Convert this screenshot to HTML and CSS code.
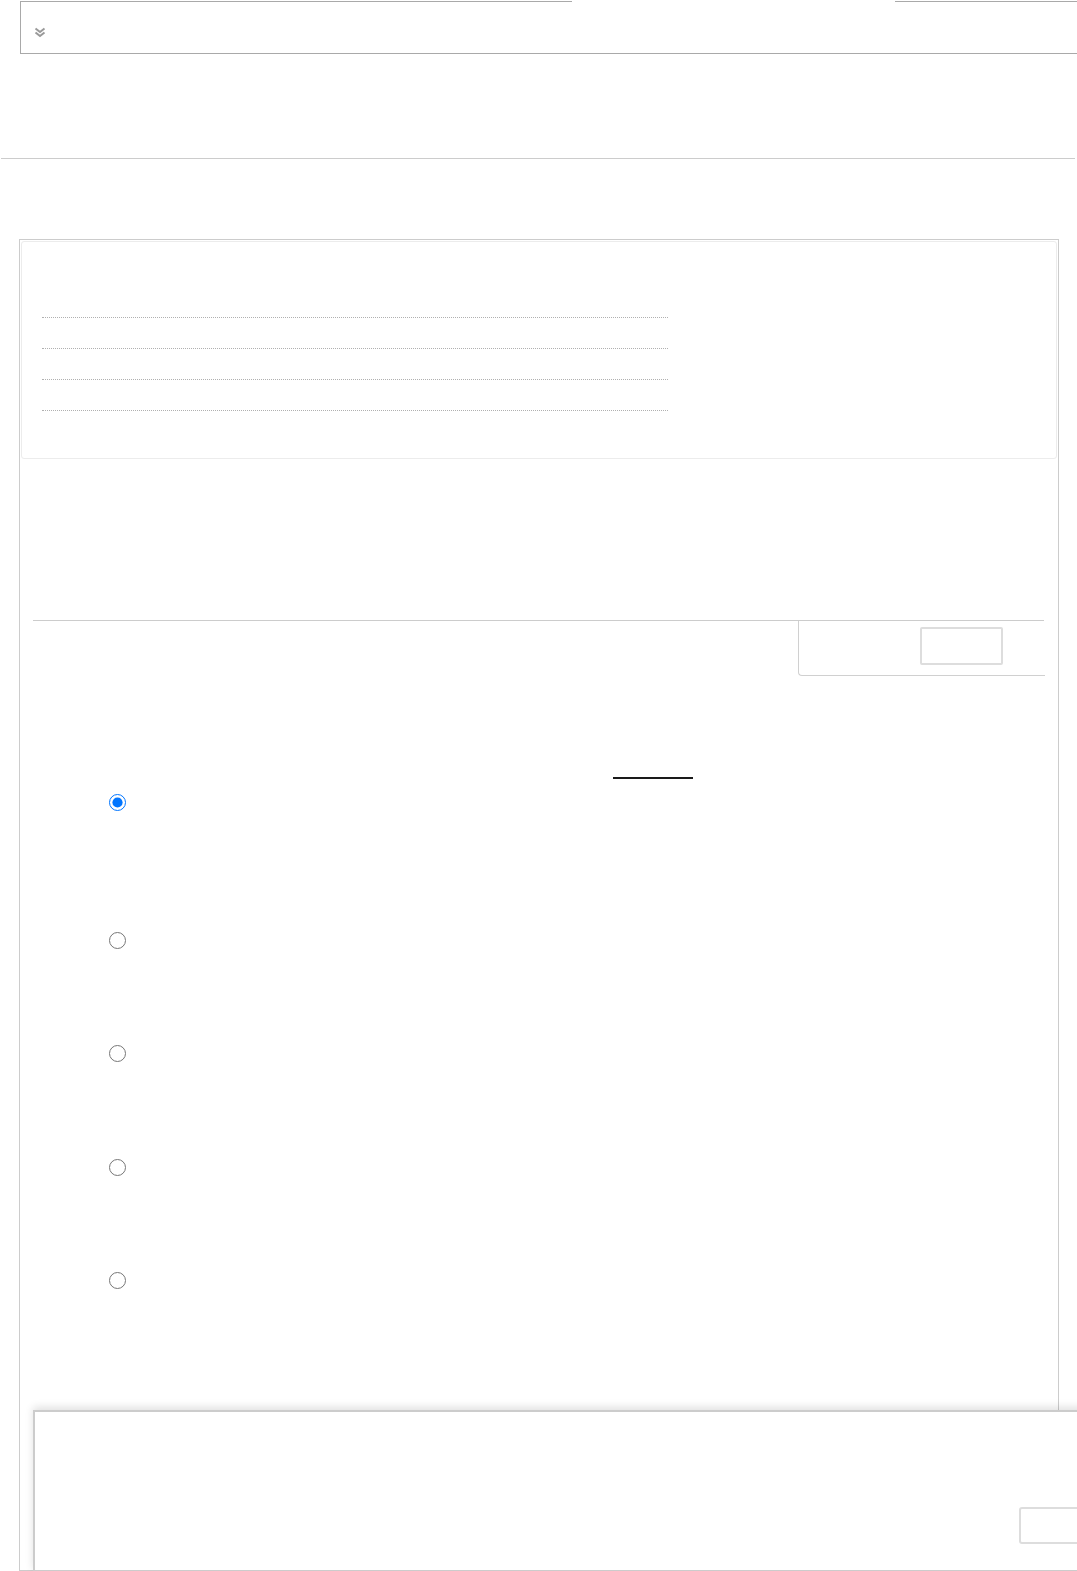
FILE: index.html
```html
<!DOCTYPE html>
<html lang="en">
<head>
<meta charset="utf-8">
<title>Form</title>
<link rel="stylesheet" href="styles.css">
</head>
<body>
  <fieldset class="topbar">
    <legend class="topbar-legend"></legend>
    <span class="chevron">
      <svg width="12" height="11" viewBox="0 0 12 11" aria-hidden="true">
        <polyline points="1.5,1.5 6,5 10.5,1.5" fill="none" stroke="#9a9a9a" stroke-width="2"/>
        <polyline points="1.5,5.5 6,9 10.5,5.5" fill="none" stroke="#9a9a9a" stroke-width="2"/>
      </svg>
    </span>
  </fieldset>

  <div class="rule"></div>

  <div class="panel">
    <div class="panel-head">
      <div class="dotline"></div>
      <div class="dotline"></div>
      <div class="dotline"></div>
      <div class="dotline"></div>
    </div>

    <div class="section-rule"></div>
    <div class="tab-row">
      <div class="tab-box">
        <span class="tab-btn"></span>
      </div>
    </div>

    <div class="link-row"><span class="link-line"></span></div>

    <div class="radios">
      <label class="radio-row first"><input type="radio" name="opt" class="radio" checked></label>
      <label class="radio-row"><input type="radio" name="opt" class="radio"></label>
      <label class="radio-row mid"><input type="radio" name="opt" class="radio"></label>
      <label class="radio-row"><input type="radio" name="opt" class="radio"></label>
      <label class="radio-row last"><input type="radio" name="opt" class="radio"></label>
    </div>

    <div class="footer-box">
      <span class="footer-btn"></span>
    </div>
  </div>
</body>
</html>
```

FILE: styles.css
```css
html, body {
  margin: 0;
  padding: 0;
  background: #ffffff;
  overflow: hidden;
  font-family: "Liberation Sans", Arial, sans-serif;
}

.topbar {
  margin: 1px 0 0 20px;
  padding: 0;
  width: 1100px;
  height: 53px;
  border: 1px solid #a9a9a9;
  box-sizing: border-box;
  min-width: 0;
}

.topbar-legend {
  margin-left: 551px;
  width: 323px;
  height: 0;
  padding: 0;
  font-size: 0;
  line-height: 0;
}

.chevron {
  display: block;
  margin: 25px 0 0 13px;
  width: 12px;
  height: 11px;
}

.chevron svg {
  display: block;
}

.rule {
  margin: 104px 0 0 1px;
  width: 1074px;
  height: 1px;
  background: #cccccc;
}

.panel {
  margin: 80px 0 0 19px;
  width: 1040px;
  height: 1332px;
  border: 1px solid #cccccc;
  padding: 1px;
  box-sizing: border-box;
}

.panel-head {
  height: 218px;
  border: 1px solid #ececec;
  border-radius: 3px;
  box-sizing: border-box;
  padding: 45px 0 0 20px;
}

.dotline {
  width: 626px;
  height: 31px;
  box-sizing: border-box;
  border-bottom: 1px dotted #b0b0b0;
}

.section-rule {
  margin: 161px 13px 0 12px;
  height: 1px;
  background: #cccccc;
}

.tab-row {
  display: flex;
  justify-content: flex-end;
  margin-right: 12px;
}

.tab-box {
  width: 247px;
  height: 55px;
  box-sizing: border-box;
  border-left: 1px solid #d0d0d0;
  border-bottom: 1px solid #d0d0d0;
  border-bottom-left-radius: 4px;
  padding: 6px 0 0 121px;
}

.tab-btn {
  display: block;
  width: 83px;
  height: 38px;
  box-sizing: border-box;
  border: 2px solid #dddddd;
  border-radius: 2px;
}

.link-row {
  margin-top: 101px;
  padding-left: 592px;
  height: 2px;
}

.link-line {
  display: block;
  width: 80px;
  height: 2px;
  background: #1a1a1a;
}

.radios {
  display: flex;
  flex-direction: column;
  margin-top: 15px;
  padding-left: 88px;
}

.radio-row {
  display: block;
  height: 113px;
}

.radio-row.first {
  height: 138px;
}

.radio-row.mid {
  height: 114px;
}

.radio-row.last {
  height: 138px;
}

.radio {
  display: block;
  margin: 0;
  width: 17px;
  height: 17px;
  accent-color: #0075ff;
}

.footer-box {
  position: relative;
  margin-left: 12px;
  width: 1070px;
  height: 162px;
  box-sizing: border-box;
  border: 2px solid #cccccc;
  background: #ffffff;
  box-shadow: 0 -3px 8px rgba(0, 0, 0, 0.12);
  padding: 95px 0 0 984px;
}

.footer-btn {
  display: block;
  width: 70px;
  height: 37px;
  box-sizing: border-box;
  border: 2px solid #dddddd;
  border-radius: 3px;
}
```
